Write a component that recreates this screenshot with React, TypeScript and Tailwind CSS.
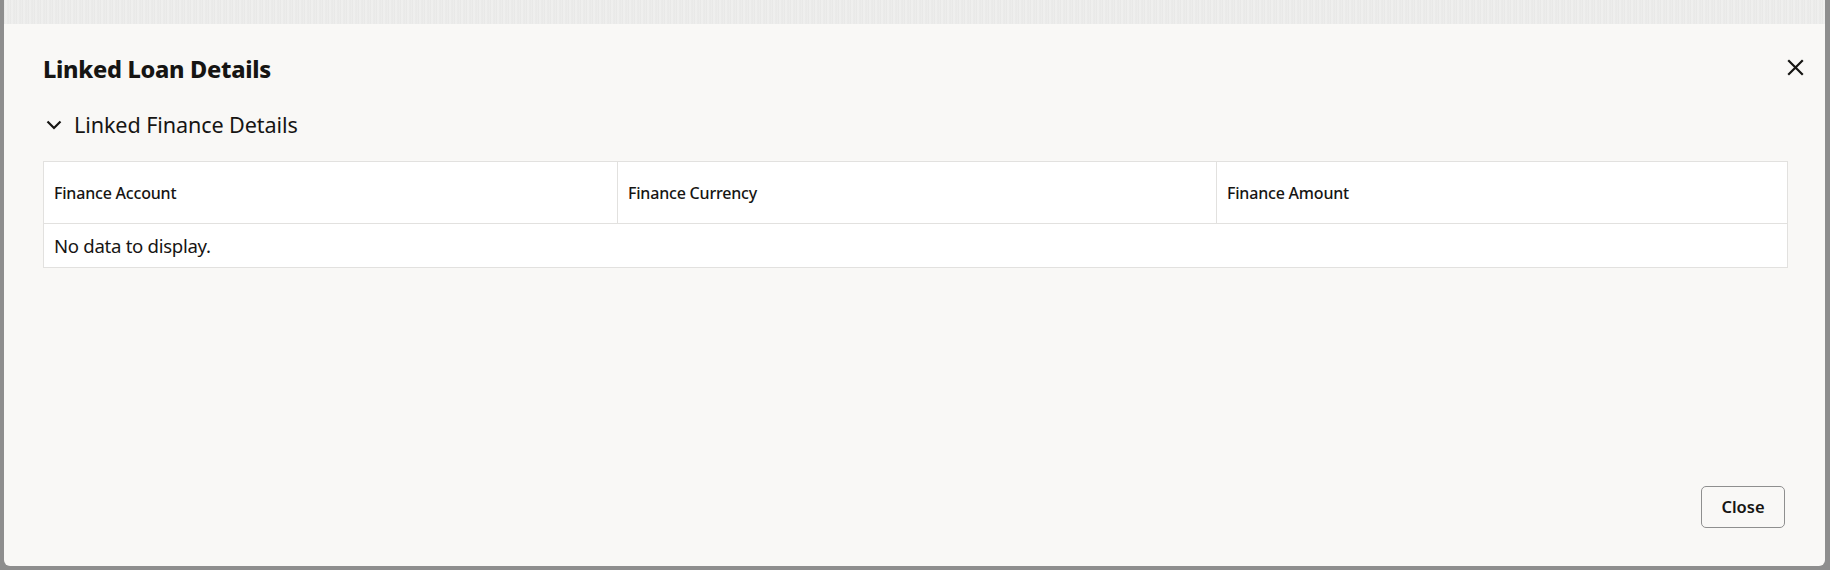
import React from "react";

export default function App() {
  const font = { fontFamily: '"Noto Sans", "Open Sans", sans-serif' };
  return (
    <div
      className="w-[1830px] h-[570px] bg-[#8e8e8e] flex flex-col pl-[4px] pr-[5px] pb-[4px] overflow-hidden text-[#161513]"
      style={font}
    >
      <div className="h-[24px] shrink-0 bg-[#ececeb] bg-[repeating-linear-gradient(90deg,#e6e6e5_0px,#f1f1f0_2px,#e8e8e7_4px,#eeeeed_6px)]" />
      <div className="flex-1 bg-[#f9f8f6] rounded-b-[6px] flex flex-col pl-[39px] pr-[40px]">
        <div className="flex items-start justify-between pt-[30px]">
          <h1 className="text-[23.5px] font-extrabold leading-[30px] tracking-[-0.3px]">Linked Loan Details</h1>
          <button className="mt-[1px] mr-[-22px] w-[24px] h-[24px] flex items-center justify-center" aria-label="Close">
            <svg width="17" height="17" viewBox="0 0 17 17" fill="none" stroke="#161513" strokeWidth="2.2" strokeLinecap="square">
              <path d="M2 2 L15 15 M15 2 L2 15" />
            </svg>
          </button>
        </div>
        <div className="flex items-center mt-[27px] h-[28px]">
          <svg width="16" height="10" viewBox="0 0 16 10" fill="none" stroke="#161513" strokeWidth="2.2" className="ml-[3px]">
            <path d="M1.5 1.5 L8 8 L14.5 1.5" />
          </svg>
          <span className="ml-[12px] text-[21.6px] leading-[28px] tracking-[-0.1px]">Linked Finance Details</span>
        </div>
        <div className="mt-[22px] w-[1745px] border border-[#e2e1df] bg-white">
          <div className="flex h-[62px] border-b border-[#e2e1df]">
            <div className="w-[573px] flex items-center pl-[10px] text-[16px] font-medium tracking-[-0.2px]">Finance Account</div>
            <div className="w-[599px] flex items-center pl-[10px] border-l border-[#e2e1df] text-[16px] font-medium tracking-[-0.2px]">Finance Currency</div>
            <div className="flex-1 flex items-center pl-[10px] border-l border-[#e2e1df] text-[16px] font-medium tracking-[-0.2px]">Finance Amount</div>
          </div>
          <div className="h-[43px] flex items-center pl-[10px] text-[18.6px] tracking-[-0.3px]">No data to display.</div>
        </div>
        <div className="flex-1" />
        <div className="flex justify-end pb-[38px]">
          <button className="w-[84px] h-[42px] rounded-[5px] border border-[#8f8f8f] bg-[#f9f8f6] text-[16.5px] font-semibold">
            Close
          </button>
        </div>
      </div>
    </div>
  );
}
